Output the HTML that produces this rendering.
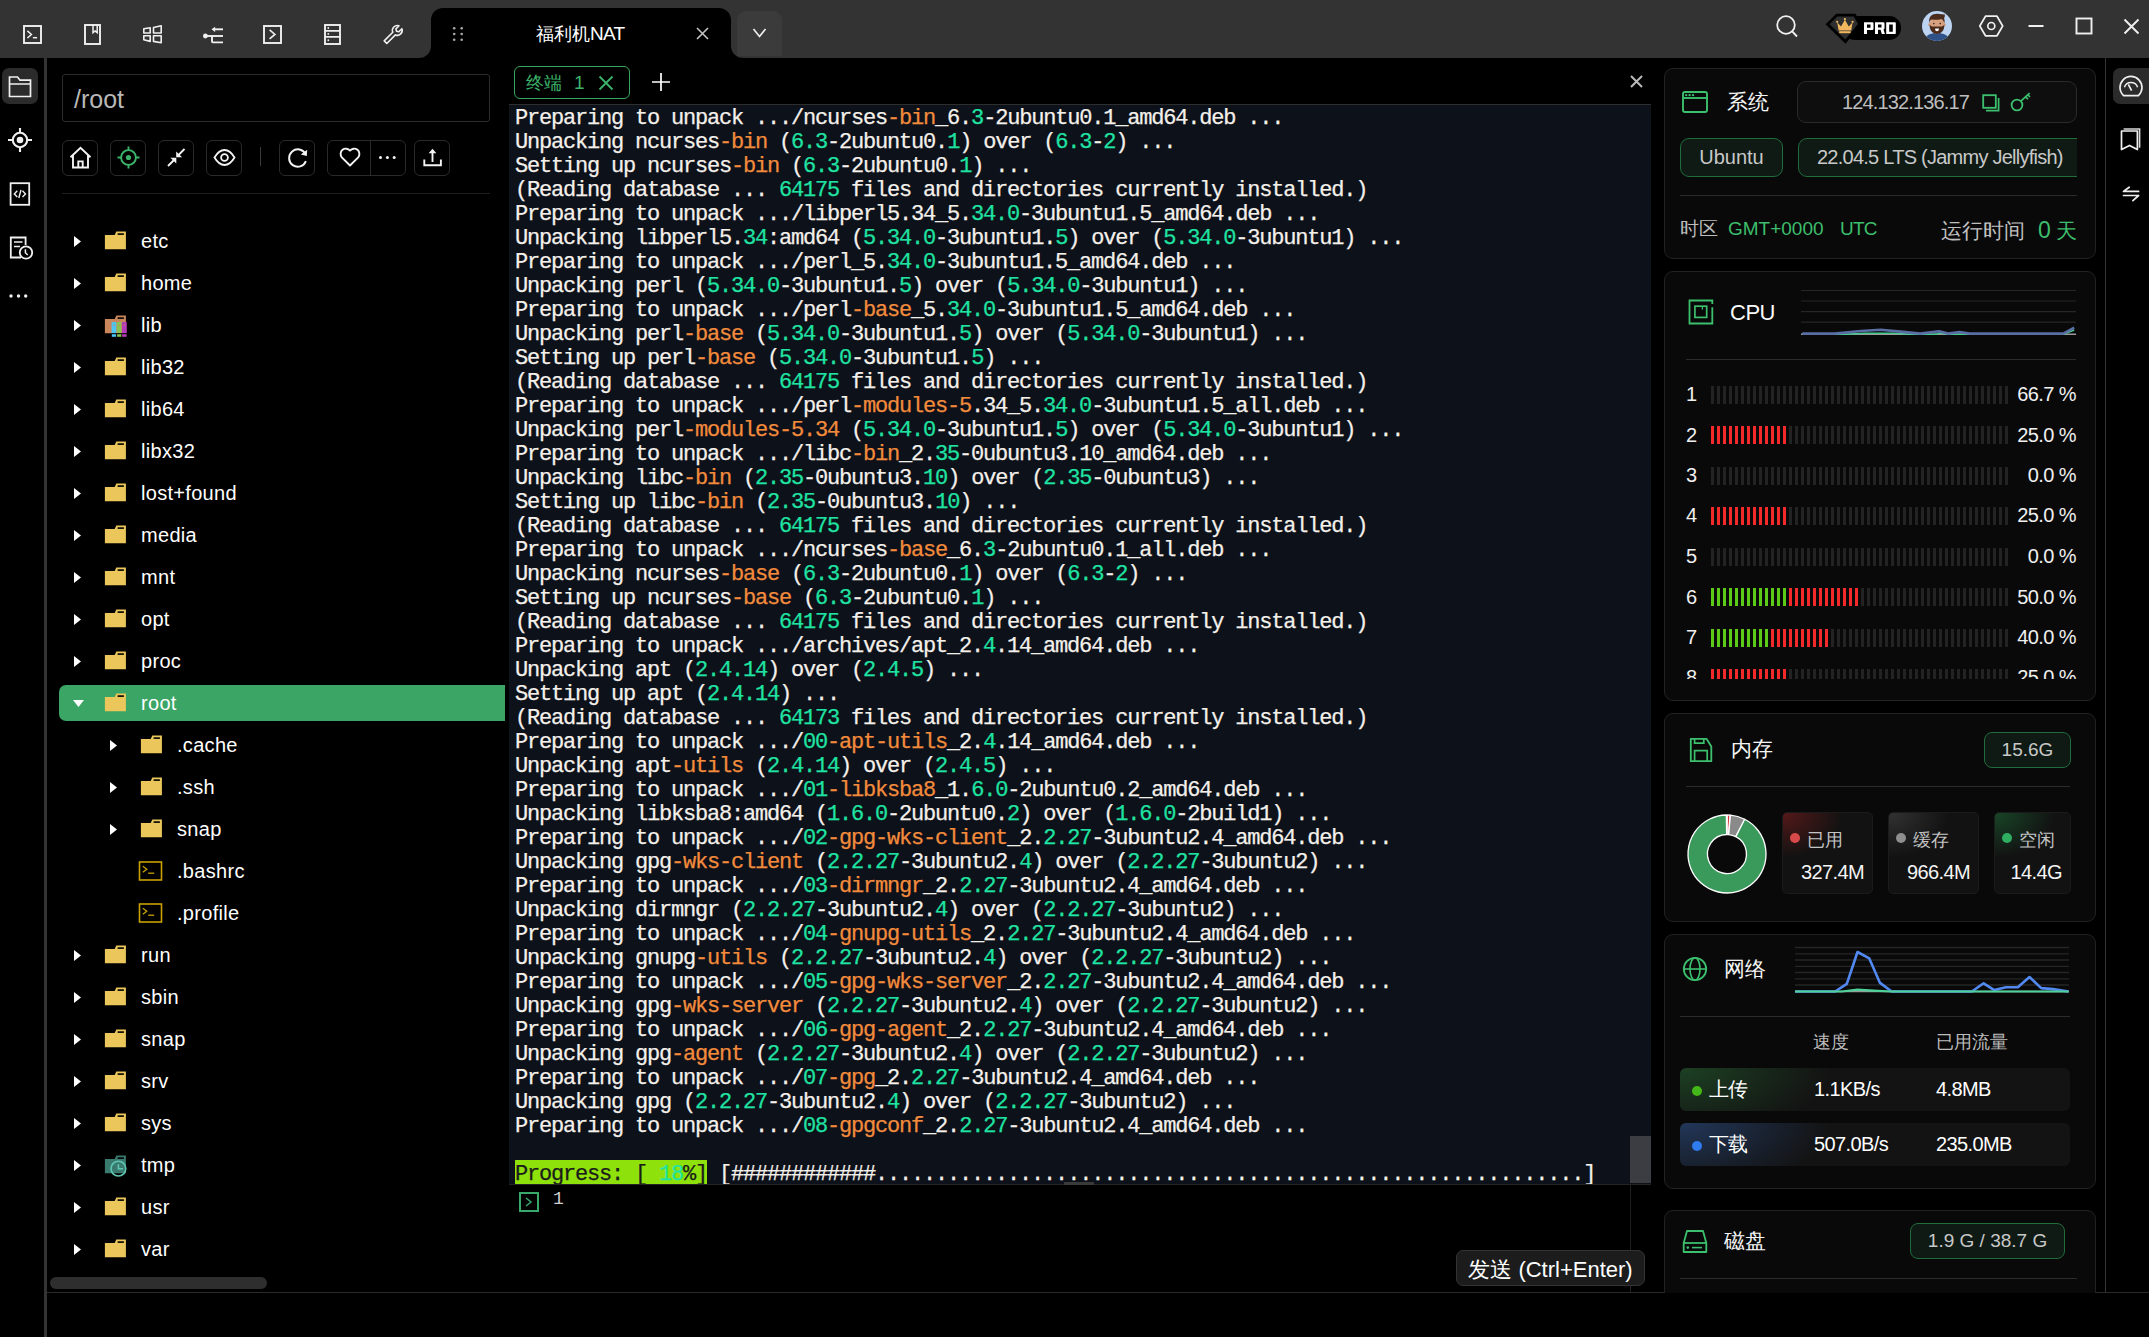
<!DOCTYPE html>
<html><head><meta charset="utf-8">
<style>
*{margin:0;padding:0;box-sizing:border-box}
html,body{width:2149px;height:1337px;overflow:hidden;background:#000}
body{position:relative;font-family:"Liberation Sans",sans-serif;color:#fff}
.a{position:absolute}
svg{position:absolute;overflow:visible}
/* top bar */
#top{left:0;top:0;width:2149px;height:58px;background:#333}
#tab{left:431px;top:8px;width:300px;height:50px;background:#000;border-radius:12px 12px 0 0}
.tabc{width:12px;height:12px;top:46px;background:#000}
.tabc i{position:absolute;left:0;top:0;width:12px;height:12px;background:#333}
#dd{left:737px;top:11px;width:45px;height:45px;background:#3b3b3b;border-radius:9px 9px 0 0}
/* left icon bar */
#lsep{left:44px;top:58px;width:3px;height:1279px;background:#333}
#lhi{left:2px;top:68px;width:36px;height:36px;background:#2b2b2b;border-radius:7px}
/* file panel */
#path{left:62px;top:74px;width:428px;height:48px;border:1px solid #2c2c2c;border-radius:3px;font-size:25px;color:#b8b8b8;padding:11px 0 0 11px;line-height:27px}
.tb{top:140px;width:36px;height:36px;border:1px solid #2a2a2a;border-radius:6px}
#tsep{left:260px;top:147px;width:1px;height:19px;background:#3a3a3a}
#fline{left:62px;top:193px;width:428px;height:1px;background:#1e1e1e}
.row{left:0;width:505px;height:36px;font-size:20px;line-height:36px}
.row .t{position:absolute;top:0}
#hl{left:59px;top:685px;width:446px;height:36px;background:#3aa565;border-radius:7px 0 0 7px}
#hscroll{left:50px;top:1277px;width:217px;height:12px;background:#2e2e2e;border-radius:6px}
/* terminal */
#ttab{left:514px;top:66px;width:116px;height:33px;border:1.5px solid #35a55e;border-radius:6px;color:#3cb36a;font-size:20px}
#term{left:509px;top:103px;width:1142px;height:81px;}
#tbg{left:509px;top:104px;width:1142px;height:1080px;background:#0d111a;border-top:1px solid #2e2e2e;overflow:hidden}
#tlines{position:absolute;left:6px;top:2px;font-family:"Liberation Mono",monospace;font-size:22px;letter-spacing:-1.2px;line-height:24px;white-space:pre;color:#f4f0ea;-webkit-text-stroke:0.25px currentColor}
.g{color:#1fe3a2}.o{color:#f38b3c}
.pg{background:#8ee10b;color:#1b1b1b;box-shadow:0 -2px 0 #8ee10b}
#tscroll{left:1630px;top:1136px;width:21px;height:47px;background:#3c3d42}
#tbline{left:509px;top:1184px;width:1142px;height:1px;background:#252525}
#vline{left:1630px;top:1184px;width:1px;height:108px;background:#1f1f1f}
#send{left:1456px;top:1250px;width:189px;height:36px;background:#1c1c1c;border:1px solid #333;border-radius:7px;font-size:22px;line-height:37px;text-align:center;color:#fff}
#bline{left:47px;top:1292px;width:2102px;height:1px;background:#2a2a2a}
/* right panel */
.card{left:1664px;width:432px;background:#090909;border:1px solid #222;border-radius:9px;overflow:hidden}
.cn{font-size:21px;color:#f5f5f5}
.pill{border:1px solid #2a2a2a;border-radius:9px}
.gpill{background:#0f1a14;border:1px solid #206c3c;border-radius:9px;color:#c8c8c8;text-align:center}
.div{height:1px;background:#2a2a2a}
#rsep{left:2105px;top:58px;width:1px;height:1234px;background:#333}
#rhi{left:2113px;top:68px;width:36px;height:36px;background:#2b2b2b;border-radius:7px 0 0 7px}
.bars{height:18px;width:297px;background:repeating-linear-gradient(90deg,#232323 0 3px,transparent 3px 6px)}
.bars i{position:absolute;top:0;height:18px}
.rd{background:repeating-linear-gradient(90deg,#f42a2a 0 3px,transparent 3px 6px)}
.gr{background:repeating-linear-gradient(90deg,#5ccb17 0 3px,transparent 3px 6px)}
.cpun{font-size:20px;color:#f0f0f0}
.pct{font-size:20px;color:#f0f0f0;text-align:right;width:70px}
.sbox{top:812px;height:82px;background:#141414;border-radius:5px;border:1px solid #1b1b1b;overflow:hidden}
.sbox .lb{position:absolute;left:24px;top:15px;font-size:18px;color:#c4c4c4}
.sbox .v{position:absolute;top:48px;font-size:20px;color:#f4f4f4;letter-spacing:-0.6px}
.dot{position:absolute;width:9px;height:9px;border-radius:50%}
.nrow{left:1680px;width:390px;height:43px;background:#141414;border-radius:6px;font-size:20px;line-height:43px}
.nrow span{position:absolute;top:0;letter-spacing:-0.6px}
</style></head><body>
<!-- TOP BAR -->
<div id="top" class="a"></div>
<div id="tab" class="a"></div>
<div class="a tabc" style="left:419px"><i style="border-bottom-right-radius:12px"></i></div>
<div class="a tabc" style="left:731px"><i style="border-bottom-left-radius:12px"></i></div>
<div id="dd" class="a"></div>
<svg width="22" height="22" viewBox="0 0 22 22" style="left:22px;top:24px" ><rect x="2" y="2" width="17" height="17" fill="none" stroke="#f0f0f0" stroke-width="1.9"/><path d="M5.4 6.9l4 3.6l-4 3.5" fill="none" stroke="#f0f0f0" stroke-width="1.5"/><path d="M10.9 13.7h4.2" stroke="#f0f0f0" stroke-width="1.5"/></svg>
<svg width="20" height="23" viewBox="0 0 20 23" style="left:83px;top:23px" ><rect x="2" y="2" width="15" height="19" fill="none" stroke="#f0f0f0" stroke-width="1.9"/><path d="M10 2v7.6l2.1-1.7l2.1 1.7v-7.6" fill="none" stroke="#f0f0f0" stroke-width="1.5"/></svg>
<svg width="22" height="21" viewBox="0 0 22 21" style="left:142px;top:24px" ><path d="M1.8 4.7L8.2 3.8V9H1.8Z M11.5 3.5L19.2 1.7V9H11.5Z M1.8 11.8H8.2V17.4L1.8 15.8Z M11.5 11.8H19.2V18.8L11.5 17.4Z" fill="none" stroke="#f0f0f0" stroke-width="1.6" stroke-linejoin="round"/></svg>
<svg width="23" height="19" viewBox="0 0 23 19" style="left:202px;top:26px" ><circle cx="3.4" cy="10" r="2.4" fill="#f0f0f0"/><path d="M3 10H21" stroke="#f0f0f0" stroke-width="1.9"/><path d="M10 10v5.6a0.8 0.8 0 0 0 0.8 0.8H21" fill="none" stroke="#f0f0f0" stroke-width="1.9"/><path d="M12 3.3H21" stroke="#f0f0f0" stroke-width="1.9"/><path d="M9.5 3.3l3.6-2.6v5.2z" fill="#f0f0f0"/></svg>
<svg width="22" height="22" viewBox="0 0 22 22" style="left:262px;top:24px" ><rect x="2" y="2" width="17" height="17" fill="none" stroke="#f0f0f0" stroke-width="1.9"/><path d="M7.6 5.9l5.3 4.5l-5.3 4.4" fill="none" stroke="#f0f0f0" stroke-width="1.6"/></svg>
<svg width="20" height="23" viewBox="0 0 20 23" style="left:323px;top:23px" ><rect x="2" y="2" width="15" height="19" fill="none" stroke="#f0f0f0" stroke-width="1.9"/><path d="M2 7.9H17M2 13.9H17" stroke="#f0f0f0" stroke-width="1.7"/><circle cx="5.3" cy="5" r="0.95" fill="#f0f0f0"/><circle cx="5.3" cy="10.9" r="0.95" fill="#f0f0f0"/><circle cx="5.3" cy="17.2" r="0.95" fill="#f0f0f0"/></svg>
<svg width="22" height="22" viewBox="0 0 22 22" style="left:382px;top:24px" ><path d="M2.2 16.9l8.6-8.6a4.9 4.9 0 0 1 6.2-6.5l-3.1 3.1l0.6 2.3l2.3 0.6l3.1-3.1a4.9 4.9 0 0 1-6.5 6.2l-8.6 8.6z" fill="none" stroke="#f0f0f0" stroke-width="1.6" stroke-linejoin="round"/></svg>
<svg width="14" height="18" viewBox="0 0 14 18" style="left:451px;top:25px" ><circle cx="3.2" cy="3.3" r="1.3" fill="#a8a8a8"/><circle cx="3.2" cy="9" r="1.3" fill="#a8a8a8"/><circle cx="3.2" cy="14.8" r="1.3" fill="#a8a8a8"/><circle cx="10.7" cy="3.3" r="1.3" fill="#a8a8a8"/><circle cx="10.7" cy="9" r="1.3" fill="#a8a8a8"/><circle cx="10.7" cy="14.8" r="1.3" fill="#a8a8a8"/></svg>
<div class="a" style="left:536px;top:21px;font-size:18px;line-height:26px;color:#fff">福利机<span style="font-size:19px;letter-spacing:-0.7px">NAT</span></div>
<svg width="13" height="13" viewBox="0 0 13 13" style="left:696px;top:27px" ><path d="M1 1L12 12M12 1L1 12" stroke="#c4c4c4" stroke-width="1.6"/></svg>
<svg width="15" height="12" viewBox="0 0 15 12" style="left:752px;top:27px" ><path d="M1.5 2l6 7.5l6-7.5" fill="none" stroke="#f0f0f0" stroke-width="1.6"/></svg>
<svg width="24" height="25" viewBox="0 0 24 25" style="left:1775px;top:14px" ><circle cx="11" cy="11" r="8.8" fill="none" stroke="#f0f0f0" stroke-width="1.8"/><path d="M17.2 17.4L22 22.5" stroke="#f0f0f0" stroke-width="1.9"/></svg>
<svg width="78" height="32" viewBox="0 0 78 32" style="left:1825px;top:13px" ><rect x="18" y="3" width="58.1" height="23.9" rx="11.9" fill="#000"/><path d="M2.6 11.2L11.9 2.1H29.6L34.6 11.2L20.4 28.6Z" fill="#2f2f2f" stroke="#000" stroke-width="2.8" stroke-linejoin="miter"/><path d="M12.2 9.2L16 13.4L19.9 6.8L23.8 13.4L27.6 9.2L26.2 17.4H13.6Z" fill="#f0b75e"/><circle cx="12.2" cy="8.8" r="1.1" fill="#f0b75e"/><circle cx="19.9" cy="6.2" r="1.1" fill="#f0b75e"/><circle cx="27.6" cy="8.8" r="1.1" fill="#f0b75e"/><rect x="14.2" y="18.2" width="11.4" height="2" fill="#f0b75e"/><path fill-rule="evenodd" fill="#fff" d="M39 9.3h8.3a1.2 1.2 0 0 1 1.2 1.2v5.2a1.2 1.2 0 0 1-1.2 1.2h-5.3v4.1h-3z M42 11.6v3.1h3.5v-3.1z M50 9.3h8.3a1.2 1.2 0 0 1 1.2 1.2v4.8a1.2 1.2 0 0 1-1 1.2l1.4 4.5h-3.1l-1.2-4.2h-2.6v4.2h-3z M53 11.6v2.9h3.5v-2.9z M61.2 9.3h8.8a0.8 0.8 0 0 1 0.8 0.8v10.1a0.8 0.8 0 0 1-0.8 0.8h-8.8z M64.2 11.6v7.1h3.6v-7.1z"/></svg>
<svg width="32" height="32" viewBox="0 0 32 32" style="left:1921px;top:10px" ><defs><clipPath id="avc"><circle cx="16" cy="16" r="15"/></clipPath></defs><circle cx="16" cy="16" r="15" fill="#bcd4f2"/><g clip-path="url(#avc)"><path d="M3 32C4 25 9 23 16 23S28 25 29 32z" fill="#2e5288"/><rect x="14" y="19" width="4" height="5" fill="#c98f70"/><ellipse cx="16" cy="14.5" rx="7.4" ry="8" fill="#d7a07f"/><circle cx="8.8" cy="14.5" r="1.6" fill="#d7a07f"/><circle cx="23.2" cy="14.5" r="1.6" fill="#d7a07f"/><path d="M8.6 14.6c0 6.4 3.2 9.3 7.4 9.3s7.4-2.9 7.4-9.3c-1.2 1.6-2 2-3.4 2h-8c-1.4 0-2.2-.4-3.4-2z" fill="#4b2c1c"/><path d="M8.2 13.2C7.4 6.6 11 3.6 16.6 3.8c4 .1 6.4 1.4 7 0.2c.5 1.8.2 3.4-.6 4.4c.8 1.4.8 3.2.2 4.8c-.6-2.6-1.6-3.8-3-4.2c-2.8 1-6.8 1-9.6.6c-1.4.6-2 1.8-2.4 3.6z" fill="#4b2c1c"/><circle cx="12.8" cy="13.6" r="0.8" fill="#3a2416"/><circle cx="19.2" cy="13.6" r="0.8" fill="#3a2416"/><path d="M14.2 18.6h3.6v1.2a1.8 1.4 0 0 1-3.6 0z" fill="#fff"/></g></svg>
<svg width="25" height="24" viewBox="0 0 25 24" style="left:1979px;top:14px" ><path d="M6.5 2.2h11.5l5.7 9.8l-5.7 9.8h-11.5l-5.7-9.8z" fill="none" stroke="#f0f0f0" stroke-width="1.7" stroke-linejoin="round"/><circle cx="12.3" cy="12" r="3.5" fill="none" stroke="#f0f0f0" stroke-width="1.7"/></svg>
<svg width="18" height="4" viewBox="0 0 18 4" style="left:2027px;top:24px" ><path d="M1.5 2H16.5" stroke="#f0f0f0" stroke-width="2"/></svg>
<svg width="18" height="18" viewBox="0 0 18 18" style="left:2075px;top:17px" ><rect x="1.5" y="1.5" width="15" height="15" fill="none" stroke="#f0f0f0" stroke-width="1.9"/></svg>
<svg width="17" height="17" viewBox="0 0 17 17" style="left:2123px;top:18px" ><path d="M1.5 1.5L15.5 15.5M15.5 1.5L1.5 15.5" stroke="#f0f0f0" stroke-width="1.9"/></svg>
<!-- LEFT BAR -->
<div id="lsep" class="a"></div>
<div id="lhi" class="a"></div>
<svg width="24" height="23" viewBox="0 0 24 23" style="left:8px;top:75px" ><path d="M1.5 21.5V2H9.5l2.5 3.2H22.5V21.5z M1.5 9H22.5" fill="none" stroke="#f0f0f0" stroke-width="1.7" stroke-linejoin="miter"/></svg>
<svg width="26" height="26" viewBox="0 0 26 26" style="left:7px;top:127px" ><circle cx="13" cy="13" r="7.2" fill="none" stroke="#f0f0f0" stroke-width="2.1"/><circle cx="13" cy="13" r="3.3" fill="#f0f0f0"/><path d="M13 1V5.6M13 20.4V25M1 13H5.6M20.4 13H25" stroke="#f0f0f0" stroke-width="2.1"/></svg>
<svg width="22" height="24" viewBox="0 0 22 24" style="left:9px;top:182px" ><rect x="1.6" y="1.2" width="18.6" height="21.6" fill="none" stroke="#f0f0f0" stroke-width="1.8"/><path d="M8.3 8.8l-3 3.1l3 3.1M13.5 8.8l3 3.1l-3 3.1M12 8l-2.2 8" fill="none" stroke="#f0f0f0" stroke-width="1.4"/></svg>
<svg width="25" height="24" viewBox="0 0 25 24" style="left:9px;top:236px" ><path d="M12 21.5H1.8V1.5H16.6V9" fill="none" stroke="#f0f0f0" stroke-width="1.8"/><path d="M5 6H13.5M5 10.5H11" stroke="#f0f0f0" stroke-width="1.6"/><circle cx="17" cy="16.5" r="6.2" fill="#000" stroke="#f0f0f0" stroke-width="1.8"/><path d="M16.4 13.2v3.6l2.3 2.2" fill="none" stroke="#f0f0f0" stroke-width="1.5"/></svg>
<svg width="20" height="8" viewBox="0 0 20 8" style="left:9px;top:292px" ><circle cx="2" cy="4" r="1.7" fill="#f0f0f0"/><circle cx="9.5" cy="4" r="1.7" fill="#f0f0f0"/><circle cx="16.7" cy="4" r="1.7" fill="#f0f0f0"/></svg>
<!-- FILE PANEL -->
<div id="path" class="a">/root</div>
<div class="a tb" style="left:62px;width:36px"></div>
<div class="a tb" style="left:110px;width:36px"></div>
<div class="a tb" style="left:158px;width:36px"></div>
<div class="a tb" style="left:206px;width:36px"></div>
<div id="tsep" class="a"></div>
<div class="a tb" style="left:279px;width:36px"></div>
<div class="a tb" style="left:327px;width:79px"></div>
<div class="a" style="left:370px;top:140px;width:1px;height:36px;background:#2a2a2a"></div>
<div class="a tb" style="left:414px;width:36px"></div>
<svg width="25" height="24" viewBox="0 0 25 24" style="left:68px;top:146px" ><path d="M2.5 11.2L12.5 1.8L22.5 11.2M5 9V21.5H20V9M10.3 21.5V15.4H14.7V21.5" fill="none" stroke="#f4f4f4" stroke-width="1.9" stroke-linejoin="miter"/></svg>
<svg width="25" height="25" viewBox="0 0 25 25" style="left:116px;top:145px" ><circle cx="12.5" cy="12.5" r="7.4" fill="none" stroke="#3cb36a" stroke-width="1.9"/><circle cx="12.5" cy="12.5" r="2.6" fill="#3cb36a"/><path d="M12.5 1.5V5M12.5 20V23.5M1.5 12.5H5M20 12.5H23.5" stroke="#3cb36a" stroke-width="1.9"/></svg>
<svg width="20" height="21" viewBox="0 0 20 21" style="left:166px;top:147px" ><path d="M2 19L8 13M18.5 2L12.5 8" stroke="#f4f4f4" stroke-width="1.8"/><path d="M4.4 10.7H10.3V16.6Z M16.1 10.3H10.2V4.4Z" fill="#f4f4f4"/></svg>
<svg width="23" height="19" viewBox="0 0 23 19" style="left:213px;top:148px" ><path d="M1.5 9.5C5 3.5 8 2 11.5 2S18 3.5 21.5 9.5C18 15.5 15 17 11.5 17S5 15.5 1.5 9.5Z" fill="none" stroke="#f4f4f4" stroke-width="1.8"/><circle cx="11.5" cy="9.5" r="3.4" fill="none" stroke="#f4f4f4" stroke-width="1.8"/></svg>
<svg width="22" height="23" viewBox="0 0 22 23" style="left:287px;top:146px" ><path d="M18.6 8.2A8.7 8.7 0 1 0 18.9 15.2" fill="none" stroke="#f4f4f4" stroke-width="1.9"/><path d="M20.2 3.8L19.8 10.1L13.8 8.6Z" fill="#f4f4f4"/></svg>
<svg width="22" height="20" viewBox="0 0 22 20" style="left:339px;top:147px" ><path d="M11 18.5L2.8 10.3A5 5 0 0 1 11 3.6A5 5 0 0 1 19.2 10.3Z" fill="none" stroke="#f4f4f4" stroke-width="1.9" stroke-linejoin="round"/></svg>
<svg width="19" height="5" viewBox="0 0 19 5" style="left:378px;top:155px" ><circle cx="2.5" cy="2.5" r="1.5" fill="#f4f4f4"/><circle cx="9.4" cy="2.5" r="1.5" fill="#f4f4f4"/><circle cx="16.2" cy="2.5" r="1.5" fill="#f4f4f4"/></svg>
<svg width="22" height="20" viewBox="0 0 22 20" style="left:422px;top:147px" ><path d="M10.5 15V4" stroke="#f4f4f4" stroke-width="1.9"/><path d="M6.6 6.3L10.5 1.8L14.4 6.3Z" fill="#f4f4f4"/><path d="M2.3 12.6V18.2H18.9V12.6" fill="none" stroke="#f4f4f4" stroke-width="1.9"/></svg>
<div id="fline" class="a"></div>
<div id="hl" class="a"></div>
<svg width="8" height="11" style="left:74px;top:236px"><path d="M0 0L7 5.5L0 11z" fill="#fff"/></svg>
<svg width="23" height="23" viewBox="0 0 23 23" style="left:104px;top:231px"><path d="M0.9 4H10.7L12.3 0.4H21.9V18.3H0.9Z" fill="#ebc75b"/><rect x="13.6" y="2.3" width="6.3" height="1.6" fill="#000"/></svg>
<div class="a" style="left:141px;top:223px;font-size:20px;line-height:36px;color:#fff;letter-spacing:0.3px">etc</div>
<svg width="8" height="11" style="left:74px;top:278px"><path d="M0 0L7 5.5L0 11z" fill="#fff"/></svg>
<svg width="23" height="23" viewBox="0 0 23 23" style="left:104px;top:273px"><path d="M0.9 4H10.7L12.3 0.4H21.9V18.3H0.9Z" fill="#ebc75b"/><rect x="13.6" y="2.3" width="6.3" height="1.6" fill="#000"/></svg>
<div class="a" style="left:141px;top:265px;font-size:20px;line-height:36px;color:#fff;letter-spacing:0.3px">home</div>
<svg width="8" height="11" style="left:74px;top:320px"><path d="M0 0L7 5.5L0 11z" fill="#fff"/></svg>
<svg width="23" height="24" viewBox="0 0 23 24" style="left:104px;top:315px"><path d="M0.9 4H10.7L12.3 0.4H21.9V18.3H0.9Z" fill="#c8865a"/><rect x="13.6" y="2.3" width="6.3" height="1.6" fill="#000"/><path d="M7.6 7.1h4.7v11h-4.7z" fill="#4cc6f3"/><path d="M12.9 7.1h4.6v11h-4.6z" fill="#8bc34f"/><path d="M17.9 7.1h4.9v11h-4.9z" fill="#b63bb8"/><path d="M7.6 18.6h4.7v3.4h-4.7z M12.9 18.6h4.6v3.4h-4.6z M17.9 18.6h4.9v3.4h-4.9z" fill="#000"/><path d="M7.8 19.2h4.3v2.6h-4.3z" fill="#4cc6f3"/><path d="M13.1 19.2h4.2v2.6h-4.2z" fill="#8bc34f"/><path d="M18.1 19.2h4.5v2.6h-4.5z" fill="#b63bb8"/><path d="M9 10.2h2M14.2 10.2h2M19.3 10.2h2" stroke="#c8865a" stroke-width="0.8"/></svg>
<div class="a" style="left:141px;top:307px;font-size:20px;line-height:36px;color:#fff;letter-spacing:0.3px">lib</div>
<svg width="8" height="11" style="left:74px;top:362px"><path d="M0 0L7 5.5L0 11z" fill="#fff"/></svg>
<svg width="23" height="23" viewBox="0 0 23 23" style="left:104px;top:357px"><path d="M0.9 4H10.7L12.3 0.4H21.9V18.3H0.9Z" fill="#ebc75b"/><rect x="13.6" y="2.3" width="6.3" height="1.6" fill="#000"/></svg>
<div class="a" style="left:141px;top:349px;font-size:20px;line-height:36px;color:#fff;letter-spacing:0.3px">lib32</div>
<svg width="8" height="11" style="left:74px;top:404px"><path d="M0 0L7 5.5L0 11z" fill="#fff"/></svg>
<svg width="23" height="23" viewBox="0 0 23 23" style="left:104px;top:399px"><path d="M0.9 4H10.7L12.3 0.4H21.9V18.3H0.9Z" fill="#ebc75b"/><rect x="13.6" y="2.3" width="6.3" height="1.6" fill="#000"/></svg>
<div class="a" style="left:141px;top:391px;font-size:20px;line-height:36px;color:#fff;letter-spacing:0.3px">lib64</div>
<svg width="8" height="11" style="left:74px;top:446px"><path d="M0 0L7 5.5L0 11z" fill="#fff"/></svg>
<svg width="23" height="23" viewBox="0 0 23 23" style="left:104px;top:441px"><path d="M0.9 4H10.7L12.3 0.4H21.9V18.3H0.9Z" fill="#ebc75b"/><rect x="13.6" y="2.3" width="6.3" height="1.6" fill="#000"/></svg>
<div class="a" style="left:141px;top:433px;font-size:20px;line-height:36px;color:#fff;letter-spacing:0.3px">libx32</div>
<svg width="8" height="11" style="left:74px;top:488px"><path d="M0 0L7 5.5L0 11z" fill="#fff"/></svg>
<svg width="23" height="23" viewBox="0 0 23 23" style="left:104px;top:483px"><path d="M0.9 4H10.7L12.3 0.4H21.9V18.3H0.9Z" fill="#ebc75b"/><rect x="13.6" y="2.3" width="6.3" height="1.6" fill="#000"/></svg>
<div class="a" style="left:141px;top:475px;font-size:20px;line-height:36px;color:#fff;letter-spacing:0.3px">lost+found</div>
<svg width="8" height="11" style="left:74px;top:530px"><path d="M0 0L7 5.5L0 11z" fill="#fff"/></svg>
<svg width="23" height="23" viewBox="0 0 23 23" style="left:104px;top:525px"><path d="M0.9 4H10.7L12.3 0.4H21.9V18.3H0.9Z" fill="#ebc75b"/><rect x="13.6" y="2.3" width="6.3" height="1.6" fill="#000"/></svg>
<div class="a" style="left:141px;top:517px;font-size:20px;line-height:36px;color:#fff;letter-spacing:0.3px">media</div>
<svg width="8" height="11" style="left:74px;top:572px"><path d="M0 0L7 5.5L0 11z" fill="#fff"/></svg>
<svg width="23" height="23" viewBox="0 0 23 23" style="left:104px;top:567px"><path d="M0.9 4H10.7L12.3 0.4H21.9V18.3H0.9Z" fill="#ebc75b"/><rect x="13.6" y="2.3" width="6.3" height="1.6" fill="#000"/></svg>
<div class="a" style="left:141px;top:559px;font-size:20px;line-height:36px;color:#fff;letter-spacing:0.3px">mnt</div>
<svg width="8" height="11" style="left:74px;top:614px"><path d="M0 0L7 5.5L0 11z" fill="#fff"/></svg>
<svg width="23" height="23" viewBox="0 0 23 23" style="left:104px;top:609px"><path d="M0.9 4H10.7L12.3 0.4H21.9V18.3H0.9Z" fill="#ebc75b"/><rect x="13.6" y="2.3" width="6.3" height="1.6" fill="#000"/></svg>
<div class="a" style="left:141px;top:601px;font-size:20px;line-height:36px;color:#fff;letter-spacing:0.3px">opt</div>
<svg width="8" height="11" style="left:74px;top:656px"><path d="M0 0L7 5.5L0 11z" fill="#fff"/></svg>
<svg width="23" height="23" viewBox="0 0 23 23" style="left:104px;top:651px"><path d="M0.9 4H10.7L12.3 0.4H21.9V18.3H0.9Z" fill="#ebc75b"/><rect x="13.6" y="2.3" width="6.3" height="1.6" fill="#000"/></svg>
<div class="a" style="left:141px;top:643px;font-size:20px;line-height:36px;color:#fff;letter-spacing:0.3px">proc</div>
<svg width="11" height="8" style="left:73px;top:700px"><path d="M0 0H11L5.5 7z" fill="#fff"/></svg>
<svg width="23" height="23" viewBox="0 0 23 23" style="left:104px;top:693px"><path d="M0.9 4H10.7L12.3 0.4H21.9V18.3H0.9Z" fill="#ebc75b"/><rect x="13.6" y="2.3" width="6.3" height="1.6" fill="#000"/></svg>
<div class="a" style="left:141px;top:685px;font-size:20px;line-height:36px;color:#fff;letter-spacing:0.3px">root</div>
<svg width="8" height="11" style="left:110px;top:740px"><path d="M0 0L7 5.5L0 11z" fill="#fff"/></svg>
<svg width="23" height="23" viewBox="0 0 23 23" style="left:140px;top:735px"><path d="M0.9 4H10.7L12.3 0.4H21.9V18.3H0.9Z" fill="#ebc75b"/><rect x="13.6" y="2.3" width="6.3" height="1.6" fill="#000"/></svg>
<div class="a" style="left:177px;top:727px;font-size:20px;line-height:36px;color:#fff;letter-spacing:0.3px">.cache</div>
<svg width="8" height="11" style="left:110px;top:782px"><path d="M0 0L7 5.5L0 11z" fill="#fff"/></svg>
<svg width="23" height="23" viewBox="0 0 23 23" style="left:140px;top:777px"><path d="M0.9 4H10.7L12.3 0.4H21.9V18.3H0.9Z" fill="#ebc75b"/><rect x="13.6" y="2.3" width="6.3" height="1.6" fill="#000"/></svg>
<div class="a" style="left:177px;top:769px;font-size:20px;line-height:36px;color:#fff;letter-spacing:0.3px">.ssh</div>
<svg width="8" height="11" style="left:110px;top:824px"><path d="M0 0L7 5.5L0 11z" fill="#fff"/></svg>
<svg width="23" height="23" viewBox="0 0 23 23" style="left:140px;top:819px"><path d="M0.9 4H10.7L12.3 0.4H21.9V18.3H0.9Z" fill="#ebc75b"/><rect x="13.6" y="2.3" width="6.3" height="1.6" fill="#000"/></svg>
<div class="a" style="left:177px;top:811px;font-size:20px;line-height:36px;color:#fff;letter-spacing:0.3px">snap</div>
<svg width="24" height="20" style="left:138px;top:861px"><rect x="1.5" y="1" width="22" height="18" fill="none" stroke="#c9a100" stroke-width="1.6"/><path d="M4.8 5.2l4 3l-4 3" stroke="#c9a100" stroke-width="1.3" fill="none"/><path d="M10.2 12.2h6" stroke="#c9a100" stroke-width="1.3"/></svg>
<div class="a" style="left:177px;top:853px;font-size:20px;line-height:36px;color:#fff;letter-spacing:0.3px">.bashrc</div>
<svg width="24" height="20" style="left:138px;top:903px"><rect x="1.5" y="1" width="22" height="18" fill="none" stroke="#c9a100" stroke-width="1.6"/><path d="M4.8 5.2l4 3l-4 3" stroke="#c9a100" stroke-width="1.3" fill="none"/><path d="M10.2 12.2h6" stroke="#c9a100" stroke-width="1.3"/></svg>
<div class="a" style="left:177px;top:895px;font-size:20px;line-height:36px;color:#fff;letter-spacing:0.3px">.profile</div>
<svg width="8" height="11" style="left:74px;top:950px"><path d="M0 0L7 5.5L0 11z" fill="#fff"/></svg>
<svg width="23" height="23" viewBox="0 0 23 23" style="left:104px;top:945px"><path d="M0.9 4H10.7L12.3 0.4H21.9V18.3H0.9Z" fill="#ebc75b"/><rect x="13.6" y="2.3" width="6.3" height="1.6" fill="#000"/></svg>
<div class="a" style="left:141px;top:937px;font-size:20px;line-height:36px;color:#fff;letter-spacing:0.3px">run</div>
<svg width="8" height="11" style="left:74px;top:992px"><path d="M0 0L7 5.5L0 11z" fill="#fff"/></svg>
<svg width="23" height="23" viewBox="0 0 23 23" style="left:104px;top:987px"><path d="M0.9 4H10.7L12.3 0.4H21.9V18.3H0.9Z" fill="#ebc75b"/><rect x="13.6" y="2.3" width="6.3" height="1.6" fill="#000"/></svg>
<div class="a" style="left:141px;top:979px;font-size:20px;line-height:36px;color:#fff;letter-spacing:0.3px">sbin</div>
<svg width="8" height="11" style="left:74px;top:1034px"><path d="M0 0L7 5.5L0 11z" fill="#fff"/></svg>
<svg width="23" height="23" viewBox="0 0 23 23" style="left:104px;top:1029px"><path d="M0.9 4H10.7L12.3 0.4H21.9V18.3H0.9Z" fill="#ebc75b"/><rect x="13.6" y="2.3" width="6.3" height="1.6" fill="#000"/></svg>
<div class="a" style="left:141px;top:1021px;font-size:20px;line-height:36px;color:#fff;letter-spacing:0.3px">snap</div>
<svg width="8" height="11" style="left:74px;top:1076px"><path d="M0 0L7 5.5L0 11z" fill="#fff"/></svg>
<svg width="23" height="23" viewBox="0 0 23 23" style="left:104px;top:1071px"><path d="M0.9 4H10.7L12.3 0.4H21.9V18.3H0.9Z" fill="#ebc75b"/><rect x="13.6" y="2.3" width="6.3" height="1.6" fill="#000"/></svg>
<div class="a" style="left:141px;top:1063px;font-size:20px;line-height:36px;color:#fff;letter-spacing:0.3px">srv</div>
<svg width="8" height="11" style="left:74px;top:1118px"><path d="M0 0L7 5.5L0 11z" fill="#fff"/></svg>
<svg width="23" height="23" viewBox="0 0 23 23" style="left:104px;top:1113px"><path d="M0.9 4H10.7L12.3 0.4H21.9V18.3H0.9Z" fill="#ebc75b"/><rect x="13.6" y="2.3" width="6.3" height="1.6" fill="#000"/></svg>
<div class="a" style="left:141px;top:1105px;font-size:20px;line-height:36px;color:#fff;letter-spacing:0.3px">sys</div>
<svg width="8" height="11" style="left:74px;top:1160px"><path d="M0 0L7 5.5L0 11z" fill="#fff"/></svg>
<svg width="23" height="23" viewBox="0 0 23 23" style="left:104px;top:1155px"><path d="M0.9 4H10.7L12.3 0.4H21.9V18.3H0.9Z" fill="#3a7a6e"/><rect x="13.6" y="2.3" width="6.3" height="1.6" fill="#000"/><circle cx="14.4" cy="13.6" r="7.4" fill="none" stroke="#5ec7b3" stroke-width="1.6"/><path d="M14.4 9.2v4.6h4.6" fill="none" stroke="#5ec7b3" stroke-width="1.6"/></svg>
<div class="a" style="left:141px;top:1147px;font-size:20px;line-height:36px;color:#fff;letter-spacing:0.3px">tmp</div>
<svg width="8" height="11" style="left:74px;top:1202px"><path d="M0 0L7 5.5L0 11z" fill="#fff"/></svg>
<svg width="23" height="23" viewBox="0 0 23 23" style="left:104px;top:1197px"><path d="M0.9 4H10.7L12.3 0.4H21.9V18.3H0.9Z" fill="#ebc75b"/><rect x="13.6" y="2.3" width="6.3" height="1.6" fill="#000"/></svg>
<div class="a" style="left:141px;top:1189px;font-size:20px;line-height:36px;color:#fff;letter-spacing:0.3px">usr</div>
<svg width="8" height="11" style="left:74px;top:1244px"><path d="M0 0L7 5.5L0 11z" fill="#fff"/></svg>
<svg width="23" height="23" viewBox="0 0 23 23" style="left:104px;top:1239px"><path d="M0.9 4H10.7L12.3 0.4H21.9V18.3H0.9Z" fill="#ebc75b"/><rect x="13.6" y="2.3" width="6.3" height="1.6" fill="#000"/></svg>
<div class="a" style="left:141px;top:1231px;font-size:20px;line-height:36px;color:#fff;letter-spacing:0.3px">var</div>
<div id="hscroll" class="a"></div>
<!-- TERMINAL -->
<div id="ttab" class="a"></div>
<div class="a" style="left:526px;top:70px;font-size:18px;line-height:26px;color:#3cb36a">终端</div>
<div class="a" style="left:574px;top:70px;font-size:19px;line-height:26px;color:#3cb36a">1</div>
<svg width="16" height="16" style="left:598px;top:75px"><path d="M1.5 1.5L14.5 14.5M14.5 1.5L1.5 14.5" stroke="#3cb36a" stroke-width="1.8"/></svg>
<svg width="20" height="20" style="left:652px;top:73px"><path d="M9 0V18M0 9H18" stroke="#fff" stroke-width="1.7"/></svg>
<svg width="13" height="13" style="left:1630px;top:75px"><path d="M1 1L12 12M12 1L1 12" stroke="#bbb" stroke-width="2"/></svg>
<div id="tbg" class="a"><div id="tlines">Preparing to unpack .../ncurses<span class="o">-bin</span>_6.<span class="g">3</span>-2ubuntu0.1_amd64.deb ...
Unpacking ncurses<span class="o">-bin</span> (<span class="g">6.3</span>-2ubuntu0.<span class="g">1</span>) over (<span class="g">6.3</span>-<span class="g">2</span>) ...
Setting up ncurses<span class="o">-bin</span> (<span class="g">6.3</span>-2ubuntu0.<span class="g">1</span>) ...
(Reading database ... <span class="g">64175</span> files and directories currently installed.)
Preparing to unpack .../libperl5.34_5.<span class="g">34.0</span>-3ubuntu1.5_amd64.deb ...
Unpacking libperl5.<span class="g">34</span>:amd64 (<span class="g">5.34.0</span>-3ubuntu1.<span class="g">5</span>) over (<span class="g">5.34.0</span>-3ubuntu1) ...
Preparing to unpack .../perl_5.<span class="g">34.0</span>-3ubuntu1.5_amd64.deb ...
Unpacking perl (<span class="g">5.34.0</span>-3ubuntu1.<span class="g">5</span>) over (<span class="g">5.34.0</span>-3ubuntu1) ...
Preparing to unpack .../perl<span class="o">-base</span>_5.<span class="g">34.0</span>-3ubuntu1.5_amd64.deb ...
Unpacking perl<span class="o">-base</span> (<span class="g">5.34.0</span>-3ubuntu1.<span class="g">5</span>) over (<span class="g">5.34.0</span>-3ubuntu1) ...
Setting up perl<span class="o">-base</span> (<span class="g">5.34.0</span>-3ubuntu1.<span class="g">5</span>) ...
(Reading database ... <span class="g">64175</span> files and directories currently installed.)
Preparing to unpack .../perl<span class="o">-modules-5</span>.34_5.<span class="g">34.0</span>-3ubuntu1.5_all.deb ...
Unpacking perl<span class="o">-modules-5.34</span> (<span class="g">5.34.0</span>-3ubuntu1.<span class="g">5</span>) over (<span class="g">5.34.0</span>-3ubuntu1) ...
Preparing to unpack .../libc<span class="o">-bin</span>_2.<span class="g">35</span>-0ubuntu3.10_amd64.deb ...
Unpacking libc<span class="o">-bin</span> (<span class="g">2.35</span>-0ubuntu3.<span class="g">10</span>) over (<span class="g">2.35</span>-0ubuntu3) ...
Setting up libc<span class="o">-bin</span> (<span class="g">2.35</span>-0ubuntu3.<span class="g">10</span>) ...
(Reading database ... <span class="g">64175</span> files and directories currently installed.)
Preparing to unpack .../ncurses<span class="o">-base</span>_6.<span class="g">3</span>-2ubuntu0.1_all.deb ...
Unpacking ncurses<span class="o">-base</span> (<span class="g">6.3</span>-2ubuntu0.<span class="g">1</span>) over (<span class="g">6.3</span>-<span class="g">2</span>) ...
Setting up ncurses<span class="o">-base</span> (<span class="g">6.3</span>-2ubuntu0.<span class="g">1</span>) ...
(Reading database ... <span class="g">64175</span> files and directories currently installed.)
Preparing to unpack .../archives/apt_2.<span class="g">4</span>.14_amd64.deb ...
Unpacking apt (<span class="g">2.4.14</span>) over (<span class="g">2.4.5</span>) ...
Setting up apt (<span class="g">2.4.14</span>) ...
(Reading database ... <span class="g">64173</span> files and directories currently installed.)
Preparing to unpack .../<span class="g">00</span><span class="o">-apt-utils</span>_2.<span class="g">4</span>.14_amd64.deb ...
Unpacking apt<span class="o">-utils</span> (<span class="g">2.4.14</span>) over (<span class="g">2.4.5</span>) ...
Preparing to unpack .../<span class="g">01</span><span class="o">-libksba8</span>_1.<span class="g">6.0</span>-2ubuntu0.2_amd64.deb ...
Unpacking libksba8:amd64 (<span class="g">1.6.0</span>-2ubuntu0.<span class="g">2</span>) over (<span class="g">1.6.0</span>-2build1) ...
Preparing to unpack .../<span class="g">02</span><span class="o">-gpg-wks-client</span>_2.<span class="g">2.27</span>-3ubuntu2.4_amd64.deb ...
Unpacking gpg<span class="o">-wks-client</span> (<span class="g">2.2.27</span>-3ubuntu2.<span class="g">4</span>) over (<span class="g">2.2.27</span>-3ubuntu2) ...
Preparing to unpack .../<span class="g">03</span><span class="o">-dirmngr</span>_2.<span class="g">2.27</span>-3ubuntu2.4_amd64.deb ...
Unpacking dirmngr (<span class="g">2.2.27</span>-3ubuntu2.<span class="g">4</span>) over (<span class="g">2.2.27</span>-3ubuntu2) ...
Preparing to unpack .../<span class="g">04</span><span class="o">-gnupg-utils</span>_2.<span class="g">2.27</span>-3ubuntu2.4_amd64.deb ...
Unpacking gnupg<span class="o">-utils</span> (<span class="g">2.2.27</span>-3ubuntu2.<span class="g">4</span>) over (<span class="g">2.2.27</span>-3ubuntu2) ...
Preparing to unpack .../<span class="g">05</span><span class="o">-gpg-wks-server</span>_2.<span class="g">2.27</span>-3ubuntu2.4_amd64.deb ...
Unpacking gpg<span class="o">-wks-server</span> (<span class="g">2.2.27</span>-3ubuntu2.<span class="g">4</span>) over (<span class="g">2.2.27</span>-3ubuntu2) ...
Preparing to unpack .../<span class="g">06</span><span class="o">-gpg-agent</span>_2.<span class="g">2.27</span>-3ubuntu2.4_amd64.deb ...
Unpacking gpg<span class="o">-agent</span> (<span class="g">2.2.27</span>-3ubuntu2.<span class="g">4</span>) over (<span class="g">2.2.27</span>-3ubuntu2) ...
Preparing to unpack .../<span class="g">07</span><span class="o">-gpg</span>_2.<span class="g">2.27</span>-3ubuntu2.4_amd64.deb ...
Unpacking gpg (<span class="g">2.2.27</span>-3ubuntu2.<span class="g">4</span>) over (<span class="g">2.2.27</span>-3ubuntu2) ...
Preparing to unpack .../<span class="g">08</span><span class="o">-gpgconf</span>_2.<span class="g">2.27</span>-3ubuntu2.4_amd64.deb ...

<span class="pg">Progress: [ <span class="g">18</span>%]</span> [############...........................................................]</div></div>
<div id="tscroll" class="a"></div>
<div id="tbline" class="a"></div>
<div class="a" style="left:1064px;top:1182px;width:30px;height:3px;background:#3a3a3a"></div>
<div id="vline" class="a"></div>
<svg width="20" height="20" style="left:519px;top:1192px"><rect x="1" y="1" width="18" height="18" fill="none" stroke="#39a86b" stroke-width="2"/><path d="M7 6l5 4l-5 4" stroke="#39a86b" stroke-width="1.5" fill="none"/></svg>
<div class="a" style="left:553px;top:1187px;font-family:'Liberation Mono',monospace;font-size:18px;line-height:24px;color:#d0d0d0">1</div>
<div id="send" class="a">发送 (Ctrl+Enter)</div>
<div id="bline" class="a"></div>
<!-- RIGHT PANEL -->
<div class="a card" style="top:68px;height:191px"></div>
<svg width="28" height="24" viewBox="0 0 28 24" style="left:1681px;top:90px" ><rect x="2" y="2" width="24" height="20" rx="2" fill="none" stroke="#3cc06e" stroke-width="1.9"/><path d="M2 8H26" stroke="#3cc06e" stroke-width="1.9"/><circle cx="5.2" cy="5.1" r="1.2" fill="#3cc06e"/><circle cx="8.6" cy="5.1" r="1.2" fill="#3cc06e"/><circle cx="12" cy="5.1" r="1.2" fill="#3cc06e"/></svg>
<div class="a" style="left:1727px;top:88px;font-size:21px;line-height:28px;color:#f5f5f5;white-space:nowrap;">系统</div>
<div class="a pill" style="left:1797px;top:81px;width:280px;height:42px;background:#0e0e0e"></div>
<div class="a" style="left:1842px;top:89px;font-size:20px;line-height:26px;color:#bdbdbd;white-space:nowrap;letter-spacing:-0.85px">124.132.136.17</div>
<svg width="19" height="19" viewBox="0 0 19 19" style="left:1982px;top:94px" ><path d="M4 16.6H16.6V4" fill="none" stroke="#3cc06e" stroke-width="1.7"/><rect x="1.2" y="1.2" width="12.6" height="12.6" fill="none" stroke="#3cc06e" stroke-width="1.8"/></svg>
<svg width="24" height="21" viewBox="0 0 24 21" style="left:2009px;top:92px" ><circle cx="8" cy="13" r="5.4" fill="none" stroke="#3cc06e" stroke-width="1.8"/><path d="M11.8 9.2L20.6 1.2M16.6 4.8l2.4 2.4M18.8 2.8l2.2 2.2" fill="none" stroke="#3cc06e" stroke-width="1.7"/></svg>
<div class="a gpill" style="left:1680px;top:138px;width:103px;height:39px;font-size:20px;line-height:37px">Ubuntu</div>
<div class="a" style="left:1798px;top:138px;width:279px;height:39px;overflow:hidden"><div class="a gpill" style="left:0;top:0;width:300px;height:39px;font-size:20px;line-height:37px;text-align:left;padding-left:18px;letter-spacing:-0.75px">22.04.5 LTS (Jammy Jellyfish)</div></div>
<div class="a div" style="left:1680px;top:195px;width:397px;background:#2b2b2b"></div>
<div class="a" style="left:1680px;top:216px;font-size:19px;line-height:26px;color:#bcbcbc;white-space:nowrap;">时区</div>
<div class="a" style="left:1728px;top:216px;font-size:19px;line-height:26px;color:#3dbe6c;white-space:nowrap;">GMT+0000</div>
<div class="a" style="left:1840px;top:216px;font-size:19px;line-height:26px;color:#3dbe6c;white-space:nowrap;letter-spacing:-0.8px">UTC</div>
<div class="a" style="left:1941px;top:217px;font-size:21px;line-height:28px;color:#c0c0c0;white-space:nowrap;">运行时间</div>
<div class="a" style="left:2038px;top:216px;font-size:23px;line-height:28px;color:#3dbe6c;white-space:nowrap;">0</div>
<div class="a" style="left:2056px;top:217px;font-size:21px;line-height:28px;color:#3dbe6c;white-space:nowrap;">天</div>
<div class="a card" style="top:271px;height:430px"></div>
<svg width="26" height="26" viewBox="0 0 26 26" style="left:1688px;top:299px" ><path d="M24.3 5V1.5H1.5V24.5H24.3V8.3" fill="none" stroke="#3cc06e" stroke-width="1.8"/><rect x="6.9" y="7.2" width="11.8" height="11.2" fill="none" stroke="#3cc06e" stroke-width="1.7"/><path d="M14.4 7.2V10.6" stroke="#3cc06e" stroke-width="1.3"/></svg>
<div class="a" style="left:1730px;top:299px;font-size:22px;line-height:28px;color:#fafafa;white-space:nowrap;letter-spacing:-0.5px">CPU</div>
<svg width="276" height="46" viewBox="0 0 276 46" style="left:1801px;top:290px" ><path d="M0 0.5H275" stroke="#262626" stroke-width="1.2"/><path d="M0 11H275" stroke="#262626" stroke-width="1.2"/><path d="M0 21.6H275" stroke="#262626" stroke-width="1.2"/><path d="M0 32.2H275" stroke="#262626" stroke-width="1.2"/><path d="M0 44.2H275" stroke="#9a9a9a" stroke-width="1.5"/><polyline points="1.3,44.3 46.7,44.3 63.2,43.3 92.8,43.3 109.3,44.3 135.6,44.3 138.2,43.0 147.1,44.3 262.3,44.3 273.2,40.0" fill="none" stroke="#46c98e" stroke-width="1.6"/><polyline points="1.3,43.6 33.6,43.6 59.9,41.0 79.7,39.7 99.4,41.6 119.2,43.6 138.2,41.3 147.1,43.6 158.7,42.0 168.5,43.6 262.3,43.6 273.2,37.7" fill="none" stroke="#5a6ea6" stroke-width="2.6" stroke-linejoin="round"/></svg>
<div class="a div" style="left:1686px;top:359px;width:390px;background:#2b2b2b"></div>
<div class="a" style="left:1665px;top:370px;width:430px;height:309px;overflow:hidden"></div>
<div class="a" style="left:0;top:0;width:2149px;height:679px;overflow:hidden;clip-path:inset(360px 0 0 0)"><div class="a bars" style="left:1711px;top:386px"></div>
<div class="a" style="left:1686px;top:381px;font-size:20px;line-height:26px;color:#f0f0f0;white-space:nowrap;">1</div>
<div class="a" style="left:1990px;top:381px;font-size:20px;line-height:26px;color:#f0f0f0;white-space:nowrap;width:86px;text-align:right;letter-spacing:-0.6px">66.7 %</div>
<div class="a bars" style="left:1711px;top:426px"><i class="rd" style="left:0px;width:78px"></i></div>
<div class="a" style="left:1686px;top:422px;font-size:20px;line-height:26px;color:#f0f0f0;white-space:nowrap;">2</div>
<div class="a" style="left:1990px;top:422px;font-size:20px;line-height:26px;color:#f0f0f0;white-space:nowrap;width:86px;text-align:right;letter-spacing:-0.6px">25.0 %</div>
<div class="a bars" style="left:1711px;top:467px"></div>
<div class="a" style="left:1686px;top:462px;font-size:20px;line-height:26px;color:#f0f0f0;white-space:nowrap;">3</div>
<div class="a" style="left:1990px;top:462px;font-size:20px;line-height:26px;color:#f0f0f0;white-space:nowrap;width:86px;text-align:right;letter-spacing:-0.6px">0.0 %</div>
<div class="a bars" style="left:1711px;top:507px"><i class="rd" style="left:0px;width:78px"></i></div>
<div class="a" style="left:1686px;top:502px;font-size:20px;line-height:26px;color:#f0f0f0;white-space:nowrap;">4</div>
<div class="a" style="left:1990px;top:502px;font-size:20px;line-height:26px;color:#f0f0f0;white-space:nowrap;width:86px;text-align:right;letter-spacing:-0.6px">25.0 %</div>
<div class="a bars" style="left:1711px;top:548px"></div>
<div class="a" style="left:1686px;top:543px;font-size:20px;line-height:26px;color:#f0f0f0;white-space:nowrap;">5</div>
<div class="a" style="left:1990px;top:543px;font-size:20px;line-height:26px;color:#f0f0f0;white-space:nowrap;width:86px;text-align:right;letter-spacing:-0.6px">0.0 %</div>
<div class="a bars" style="left:1711px;top:588px"><i class="gr" style="left:0;width:78px"></i><i class="rd" style="left:78px;width:72px"></i></div>
<div class="a" style="left:1686px;top:584px;font-size:20px;line-height:26px;color:#f0f0f0;white-space:nowrap;">6</div>
<div class="a" style="left:1990px;top:584px;font-size:20px;line-height:26px;color:#f0f0f0;white-space:nowrap;width:86px;text-align:right;letter-spacing:-0.6px">50.0 %</div>
<div class="a bars" style="left:1711px;top:629px"><i class="gr" style="left:0;width:60px"></i><i class="rd" style="left:60px;width:60px"></i></div>
<div class="a" style="left:1686px;top:624px;font-size:20px;line-height:26px;color:#f0f0f0;white-space:nowrap;">7</div>
<div class="a" style="left:1990px;top:624px;font-size:20px;line-height:26px;color:#f0f0f0;white-space:nowrap;width:86px;text-align:right;letter-spacing:-0.6px">40.0 %</div>
<div class="a bars" style="left:1711px;top:669px"><i class="rd" style="left:0px;width:78px"></i></div>
<div class="a" style="left:1686px;top:664px;font-size:20px;line-height:26px;color:#f0f0f0;white-space:nowrap;">8</div>
<div class="a" style="left:1990px;top:664px;font-size:20px;line-height:26px;color:#f0f0f0;white-space:nowrap;width:86px;text-align:right;letter-spacing:-0.6px">25.0 %</div></div>
<div class="a card" style="top:713px;height:209px"></div>
<svg width="24" height="26" viewBox="0 0 24 26" style="left:1689px;top:737px" ><path d="M1.8 1.8H17.5L22.3 9.5V24.2H1.8Z" fill="none" stroke="#3cc06e" stroke-width="1.8" stroke-linejoin="round"/><path d="M5.6 1.8V6.2H14.8V1.8" fill="none" stroke="#3cc06e" stroke-width="1.7"/><path d="M5.6 24.2V13.6H18.2V24.2" fill="none" stroke="#3cc06e" stroke-width="1.7"/></svg>
<div class="a" style="left:1731px;top:735px;font-size:21px;line-height:28px;color:#f5f5f5;white-space:nowrap;">内存</div>
<div class="a gpill" style="left:1984px;top:732px;width:87px;height:36px;font-size:19px;line-height:34px;border-radius:8px">15.6G</div>
<div class="a div" style="left:1686px;top:786px;width:384px;background:#2b2b2b"></div>
<svg width="84" height="84" viewBox="0 0 84 84" style="left:1684.5px;top:811.5px" ><path d="M42.34 3.00A39 39 0 0 1 45.06 3.12L43.53 22.56A19.5 19.5 0 0 0 42.17 22.50Z" fill="#d9393e" stroke="#fff" stroke-width="1.3" stroke-linejoin="round"/><path d="M45.40 3.15A39 39 0 0 1 59.71 7.25L50.85 24.63A19.5 19.5 0 0 0 43.70 22.57Z" fill="#8a8a8a" stroke="#fff" stroke-width="1.3" stroke-linejoin="round"/><path d="M59.71 7.25A39 39 0 1 1 41.32 3.01L41.66 22.50A19.5 19.5 0 1 0 50.85 24.63Z" fill="#3a9a5c" stroke="#fff" stroke-width="1.3" stroke-linejoin="round"/></svg>
<div class="a sbox" style="left:1782px;width:91px;background:radial-gradient(ellipse 60px 45px at 0 0,rgba(140,30,30,.55),rgba(20,20,20,0) 100%),#121212"><div class="dot" style="left:7px;top:20px;width:10px;height:10px;background:#d84a4a"></div><div class="lb">已用</div><div class="v" style="right:8px">327.4M</div></div>
<div class="a sbox" style="left:1888px;width:91px;background:radial-gradient(ellipse 60px 45px at 0 0,rgba(110,110,110,.35),rgba(20,20,20,0) 100%),#121212"><div class="dot" style="left:7px;top:20px;width:10px;height:10px;background:#8f8f8f"></div><div class="lb">缓存</div><div class="v" style="right:8px">966.4M</div></div>
<div class="a sbox" style="left:1994px;width:77px;background:radial-gradient(ellipse 60px 45px at 0 0,rgba(30,120,60,.5),rgba(20,20,20,0) 100%),#121212"><div class="dot" style="left:7px;top:20px;width:10px;height:10px;background:#2fae61"></div><div class="lb">空闲</div><div class="v" style="right:8px">14.4G</div></div>
<div class="a card" style="top:934px;height:255px"></div>
<svg width="26" height="26" viewBox="0 0 26 26" style="left:1682px;top:956px" ><circle cx="13" cy="13" r="11.2" fill="none" stroke="#3cc06e" stroke-width="1.8"/><ellipse cx="13" cy="13" rx="5" ry="11.2" fill="none" stroke="#3cc06e" stroke-width="1.6"/><path d="M1.8 13H24.2" stroke="#3cc06e" stroke-width="1.6"/></svg>
<div class="a" style="left:1724px;top:955px;font-size:21px;line-height:28px;color:#f5f5f5;white-space:nowrap;">网络</div>
<svg width="275" height="47" viewBox="0 0 275 47" style="left:1795px;top:947px" ><path d="M0 0.5H274" stroke="#262626" stroke-width="1.3"/><path d="M0 6.8H274" stroke="#262626" stroke-width="1.3"/><path d="M0 13.0H274" stroke="#262626" stroke-width="1.3"/><path d="M0 19.3H274" stroke="#262626" stroke-width="1.3"/><path d="M0 25.5H274" stroke="#262626" stroke-width="1.3"/><path d="M0 31.8H274" stroke="#262626" stroke-width="1.3"/><path d="M0 38.0H274" stroke="#262626" stroke-width="1.3"/><path d="M0 44.5H274" stroke="#9a9a9a" stroke-width="1.5"/><polyline points="0.0,44.5 40.1,44.5 51.8,36.8 62.5,5.0 74.3,11.4 85.0,35.9 96.7,44.5 176.9,44.5 188.6,36.3 199.3,43.1 211.1,40.2 222.8,40.2 234.5,30.0 246.2,41.1 258.0,42.1 273.6,44.5" fill="none" stroke="#5289f0" stroke-width="2.6" stroke-linejoin="round"/><polyline points="0.0,44.5 46.9,44.5 62.5,42.7 78.2,43.7 96.7,44.5 273.6,44.5" fill="none" stroke="#4fd29a" stroke-width="2.2"/></svg>
<div class="a div" style="left:1680px;top:1016px;width:390px;background:#2b2b2b"></div>
<div class="a" style="left:1813px;top:1029px;font-size:18px;line-height:26px;color:#bcbcbc;white-space:nowrap;">速度</div>
<div class="a" style="left:1936px;top:1029px;font-size:18px;line-height:26px;color:#bcbcbc;white-space:nowrap;">已用流量</div>
<div class="a nrow" style="top:1068px;background:radial-gradient(ellipse 150px 70px at 0 0,rgba(35,95,45,.6),rgba(20,20,20,0) 100%),#131313"><div class="dot" style="left:12px;top:18px;width:10px;height:10px;background:#44b818"></div><span style="left:29px">上传</span><span style="left:134px">1.1KB/s</span><span style="left:256px">4.8MB</span></div>
<div class="a nrow" style="top:1123px;background:radial-gradient(ellipse 150px 70px at 0 0,rgba(40,70,120,.7),rgba(20,20,20,0) 100%),#131313"><div class="dot" style="left:12px;top:18px;width:10px;height:10px;background:#2f7bf0"></div><span style="left:29px">下载</span><span style="left:134px">507.0B/s</span><span style="left:256px">235.0MB</span></div>
<div class="a card" style="top:1210px;height:120px"></div>
<svg width="26" height="25" viewBox="0 0 26 25" style="left:1682px;top:1229px" ><path d="M5 2H21L24.3 14V23H1.7V14Z" fill="none" stroke="#3cc06e" stroke-width="1.8" stroke-linejoin="round"/><path d="M1.7 14H24.3" stroke="#3cc06e" stroke-width="1.8"/><circle cx="5.8" cy="18.6" r="1.3" fill="#3cc06e"/><path d="M10 18.6H20" stroke="#3cc06e" stroke-width="1.6"/></svg>
<div class="a" style="left:1724px;top:1227px;font-size:21px;line-height:28px;color:#f5f5f5;white-space:nowrap;">磁盘</div>
<div class="a gpill" style="left:1910px;top:1223px;width:155px;height:36px;font-size:19px;line-height:34px;border-radius:8px">1.9 G / 38.7 G</div>
<div class="a div" style="left:1680px;top:1278px;width:397px;background:#2b2b2b"></div>
<div class="a" style="left:47px;top:1293px;width:2102px;height:44px;background:#000"></div>
<div id="rsep" class="a"></div>
<div id="rhi" class="a"></div>
<svg width="30" height="28" viewBox="0 0 30 28" style="left:2116px;top:72px" ><path d="M7.6 23.6A11 11 0 1 1 22.4 23.6H7.6Z" fill="none" stroke="#f0f0f0" stroke-width="1.7" stroke-linejoin="round"/><path d="M8.4 15.2A7 7 0 0 1 21.6 15.2" fill="none" stroke="#f0f0f0" stroke-width="1.5"/><path d="M12.3 12.3L15.6 18.6" stroke="#f0f0f0" stroke-width="1.7"/></svg>
<svg width="24" height="26" viewBox="0 0 24 26" style="left:2119px;top:126px" ><path d="M2.5 5H18.4V23.6L10.5 19.4L2.5 23.6Z" fill="none" stroke="#f0f0f0" stroke-width="1.7" stroke-linejoin="round"/><path d="M4.6 3H20.6V21.8" fill="none" stroke="#d8d8d8" stroke-width="1.6"/></svg>
<svg width="20" height="19" viewBox="0 0 20 19" style="left:2121px;top:184px" ><path d="M2.5 7.4H17.6M2.5 7.4L8.2 3.2M2.5 11.5H17.6M17.6 11.5L11.9 16.6" fill="none" stroke="#f0f0f0" stroke-width="1.7" stroke-linecap="round"/></svg>
</body></html>
